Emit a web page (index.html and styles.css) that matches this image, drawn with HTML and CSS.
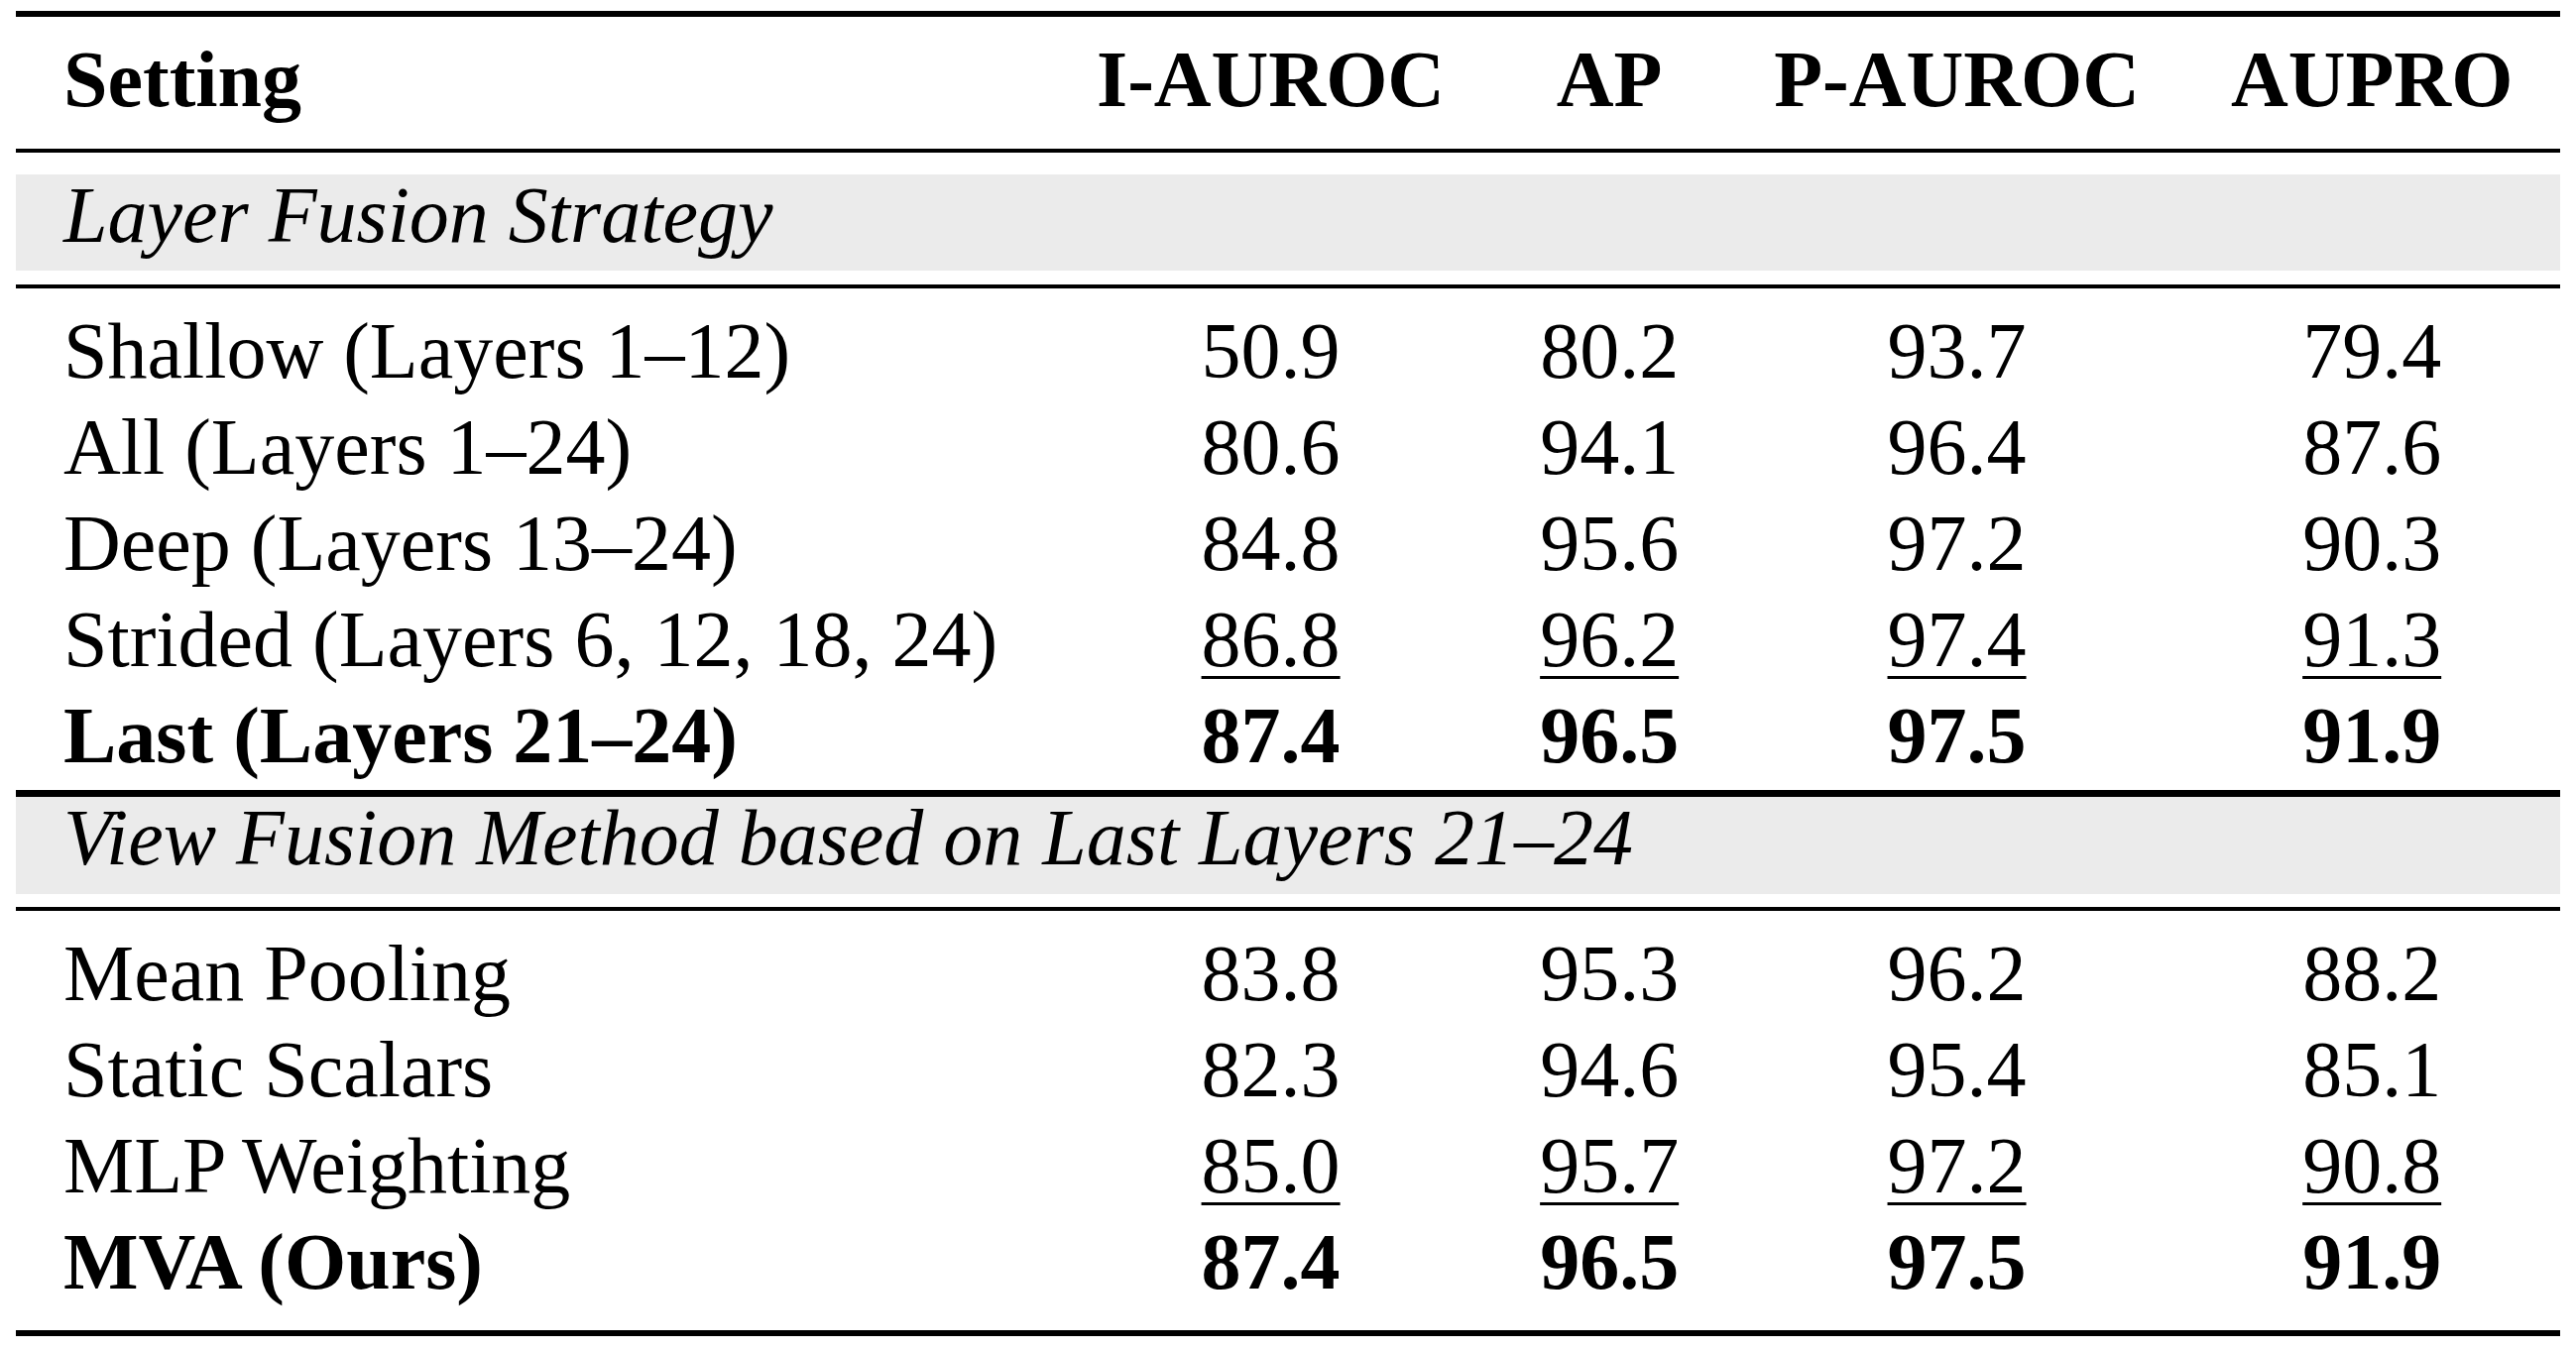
FILE: index.html
```html
<!DOCTYPE html>
<html lang="en">
<head>
<meta charset="utf-8">
<title>Ablation table</title>
<link rel="stylesheet" href="styles.css">
</head>
<body>
<table class="results">
  <thead>
    <tr>
      <th class="setting">Setting</th>
      <th>I-AUROC</th>
      <th>AP</th>
      <th>P-AUROC</th>
      <th class="endcol">AUPRO</th>
    </tr>
  </thead>
  <tbody>
    <tr class="section sec-one"><td colspan="5"><div class="band">Layer Fusion Strategy</div></td></tr>
    <tr class="first">
      <td class="label">Shallow (Layers 1–12)</td><td>50.9</td><td>80.2</td><td>93.7</td><td class="endcol">79.4</td>
    </tr>
    <tr>
      <td class="label">All (Layers 1–24)</td><td>80.6</td><td>94.1</td><td>96.4</td><td class="endcol">87.6</td>
    </tr>
    <tr>
      <td class="label">Deep (Layers 13–24)</td><td>84.8</td><td>95.6</td><td>97.2</td><td class="endcol">90.3</td>
    </tr>
    <tr>
      <td class="label">Strided (Layers 6, 12, 18, 24)</td><td><span class="u">86.8</span></td><td><span class="u">96.2</span></td><td><span class="u">97.4</span></td><td class="endcol"><span class="u">91.3</span></td>
    </tr>
    <tr class="best last-one">
      <td class="label">Last (Layers 21–24)</td><td>87.4</td><td>96.5</td><td>97.5</td><td class="endcol">91.9</td>
    </tr>
  </tbody>
  <tbody>
    <tr class="section sec-two"><td colspan="5"><div class="band">View Fusion Method based on Last Layers 21–24</div></td></tr>
    <tr class="first">
      <td class="label">Mean Pooling</td><td>83.8</td><td>95.3</td><td>96.2</td><td class="endcol">88.2</td>
    </tr>
    <tr>
      <td class="label">Static Scalars</td><td>82.3</td><td>94.6</td><td>95.4</td><td class="endcol">85.1</td>
    </tr>
    <tr>
      <td class="label">MLP Weighting</td><td><span class="u">85.0</span></td><td><span class="u">95.7</span></td><td><span class="u">97.2</span></td><td class="endcol"><span class="u">90.8</span></td>
    </tr>
    <tr class="best last-two">
      <td class="label">MVA (Ours)</td><td>87.4</td><td>96.5</td><td>97.5</td><td class="endcol">91.9</td>
    </tr>
  </tbody>
</table>
</body>
</html>
```
FILE: styles.css
```css
html, body {
  margin: 0;
  padding: 0;
  background: #ffffff;
}

.results {
  margin: 11px 0 0 16px;
  border-collapse: separate;
  border-spacing: 0;
  font-family: "Liberation Serif", "Times New Roman", serif;
  font-size: 80px;
  color: #000000;
}

.results th,
.results td {
  padding: 0 48px;
  line-height: 97px;
  text-align: center;
  white-space: nowrap;
  font-weight: normal;
  vertical-align: top;
}

.results .setting,
.results .label {
  text-align: left;
  padding-right: 52px;
}

.results .endcol {
  padding-left: 44px;
}

.results thead th {
  font-weight: bold;
  border-top: 6px solid #000000;
  border-bottom: 4px solid #000000;
  padding-top: 15px;
  padding-bottom: 21px;
}

.results .section td {
  padding: 0;
  border-bottom: 4px solid #000000;
}

.results .sec-one td {
  padding-top: 22px;
  padding-bottom: 14px;
}

.results .sec-two td {
  padding-top: 0;
  padding-bottom: 13px;
}

.band {
  box-sizing: border-box;
  height: 97px;
  padding-left: 48px;
  background: #ebebeb;
  font-style: italic;
  line-height: 82px;
  text-align: left;
}

.sec-two .band {
  height: 98px;
}

.results .first td {
  padding-top: 15px;
}

.results .best td {
  font-weight: bold;
}

.results .last-one td {
  padding-bottom: 6px;
  border-bottom: 7px solid #000000;
}

.results .last-two td {
  padding-bottom: 20px;
  border-bottom: 6px solid #000000;
}

.u {
  text-decoration: underline;
  text-decoration-thickness: 3px;
  text-underline-offset: 10px;
}
```
